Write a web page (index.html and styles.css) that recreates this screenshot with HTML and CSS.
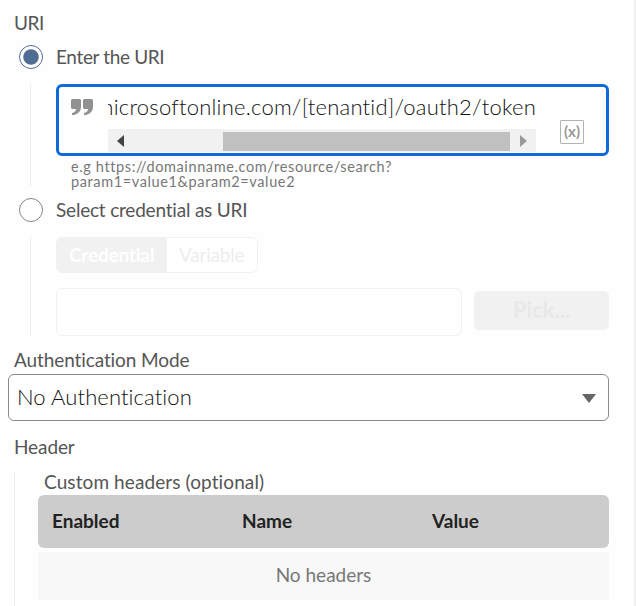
FILE: index.html
```html
<!DOCTYPE html>
<html lang="en">
<head>
<meta charset="utf-8">
<title>Request settings</title>
<link rel="stylesheet" href="styles.css">
</head>
<body>
<main class="panel">
  <div class="label label-uri">URI</div>
  <label class="option"><span class="radio radio-on"></span><span>Enter the URI</span></label>
  <section class="nested nested-uri">
    <div class="uri-field">
      <svg class="quote" viewBox="0 0 22 16"><path d="M1 0h8l1 1v7q0 6-7 8H1v-2q4-1 4-4H1L0 9V1zM13 0h8l1 1v7q0 6-7 8h-2v-2q4-1 4-4h-4l-1-1V1z"/></svg>
      <div class="uri-scroll">
        <div class="uri-clip"><span>microsoftonline.com/[tenantid]/oauth2/token</span></div>
        <div class="scrollbar">
          <svg class="arrow arrow-left" viewBox="0 0 7 12"><path d="M7 0v12L0 6z"/></svg>
          <div class="thumb"></div>
          <svg class="arrow arrow-right" viewBox="0 0 7 12"><path d="M0 0v12l7-6z"/></svg>
        </div>
      </div>
      <span class="variable-icon">(x)</span>
    </div>
    <p class="hint">e.g https://domainname.com/resource/search?<br>param1=value1&amp;param2=value2</p>
  </section>
  <label class="option"><span class="radio"></span><span class="select-label">Select credential as URI</span></label>
  <section class="nested nested-credential">
    <div class="toggle"><span class="toggle-on">Credential</span><span class="toggle-off">Variable</span></div>
    <div class="pick-row"><div class="credential-field"></div><div class="pick">Pick...</div></div>
  </section>
  <div class="label label-auth">Authentication Mode</div>
  <div class="select"><span>No Authentication</span><svg class="caret" viewBox="0 0 14 9"><path d="M0 0h14L7 9z"/></svg></div>
  <div class="label label-header">Header</div>
  <section class="headers">
    <div class="caption">Custom headers (optional)</div>
    <div class="table-head"><b>Enabled</b><b>Name</b><b>Value</b></div>
    <div class="empty">No headers</div>
  </section>
</main>
</body>
</html>
```
FILE: styles.css
```css
* { box-sizing: border-box; }
body { margin: 0; background: #fefefe; color: #555; font: 19px/24px Lato, "Liberation Sans", sans-serif; font-variant-ligatures: none; }
.panel { width: 636px; height: 606px; padding: 0 25px 0 8px; border-right: 2px solid #f0f0f0; overflow: hidden; white-space: nowrap; }
svg { display: block; flex: none; }
.label { padding-left: 6px; letter-spacing: -0.1px; }
.label-uri { height: 45px; padding-top: 11px; letter-spacing: -0.5px; }
.option { display: flex; align-items: center; height: 24px; padding-left: 11px; gap: 13px; letter-spacing: -0.35px; }
.select-label { letter-spacing: -0.2px; }
.radio { width: 24px; height: 24px; border: 1.5px solid #858585; border-radius: 50%; background: #fff; }
.radio-on { border-color: #4f6b92; background: radial-gradient(circle, #4f6d93 7.2px, #fff 8.2px); }
.nested { margin-left: 22px; padding-left: 25px; border-left: 1.5px solid #ececec; }
.nested-uri { height: 102px; margin-top: 15px; margin-bottom: 12px; }
.uri-field { display: flex; height: 72px; border: 3px solid #0f69d6; border-radius: 6px; background: #fff; }
.quote { width: 22px; height: 16px; margin: 12px 0 0 12px; fill: #929292; }
.uri-scroll { width: 428px; margin-left: 15px; }
.uri-clip { display: flex; justify-content: flex-end; height: 42px; padding-top: 7px; overflow: hidden; color: #111; font-size: 22px; font-weight: 300; letter-spacing: 0.22px; line-height: 25px; }
.scrollbar { display: flex; align-items: center; height: 23px; background: #f1f1f1; }
.arrow { width: 7px; height: 12px; }
.arrow-left { margin-left: 9px; fill: #444; }
.thumb { width: 287px; height: 19px; margin: 3px 0 1px 99px; background: #c0c0c0; }
.arrow-right { margin-left: 10px; fill: #999; }
.variable-icon { width: 24px; height: 24px; margin: 33px 0 0 24px; border: 1.5px solid #b3b3b3; border-radius: 1px; color: #999; font-size: 15px; font-weight: bold; line-height: 20px; text-align: center; }
.hint { margin: 3px 0 0 15px; color: #777; font-size: 14.5px; letter-spacing: 0.62px; line-height: 15px; }
.nested-credential { height: 98px; margin-top: 15px; color: #ededed; }
.toggle { display: flex; width: 202px; height: 36px; border: 1.5px solid #f1f1f1; border-radius: 6px; overflow: hidden; line-height: 34px; background: #fff; letter-spacing: -0.2px; }
.toggle-on { width: 110px; padding-left: 12px; background: #f1f1f1; color: #fff; font-weight: bold; }
.toggle-off { padding-left: 12px; }
.pick-row { display: flex; gap: 12px; margin-top: 15px; }
.credential-field { width: 407px; height: 48px; border: 1.5px solid #f1f1f1; border-radius: 6px; background: #fff; }
.pick { width: 135px; height: 39px; margin-top: 3px; border-radius: 5px; background: #f1f1f1; color: #e8e8e8; font-size: 22px; line-height: 38px; text-align: center; font-weight: bold; }
.label-auth { height: 39px; padding-top: 13px; }
.select { display: flex; align-items: center; justify-content: space-between; height: 47px; padding: 0 12px 2px 8px; border: 1.5px solid #8b8b8b; border-radius: 6px; background: #fff; color: #111; font-size: 22px; font-weight: 300; letter-spacing: 0.1px; }
.caret { width: 14px; height: 9px; margin-top: 4px; fill: #666; }
.label-header { height: 51px; padding-top: 14px; }
.headers { height: 140px; margin-left: 6px; padding-left: 23px; border-left: 1.5px solid #ececec; }
.caption { height: 23px; padding-left: 6px; line-height: 20px; letter-spacing: 0.1px; }
.table-head { display: grid; grid-template-columns: 190px 190px 1fr; height: 53px; padding-left: 14px; border-radius: 6px; background: #ccc; color: #222; line-height: 52px; }
.empty { height: 48px; margin-top: 4px; background: #f8f8f8; color: #777; line-height: 46px; text-align: center; }
```
